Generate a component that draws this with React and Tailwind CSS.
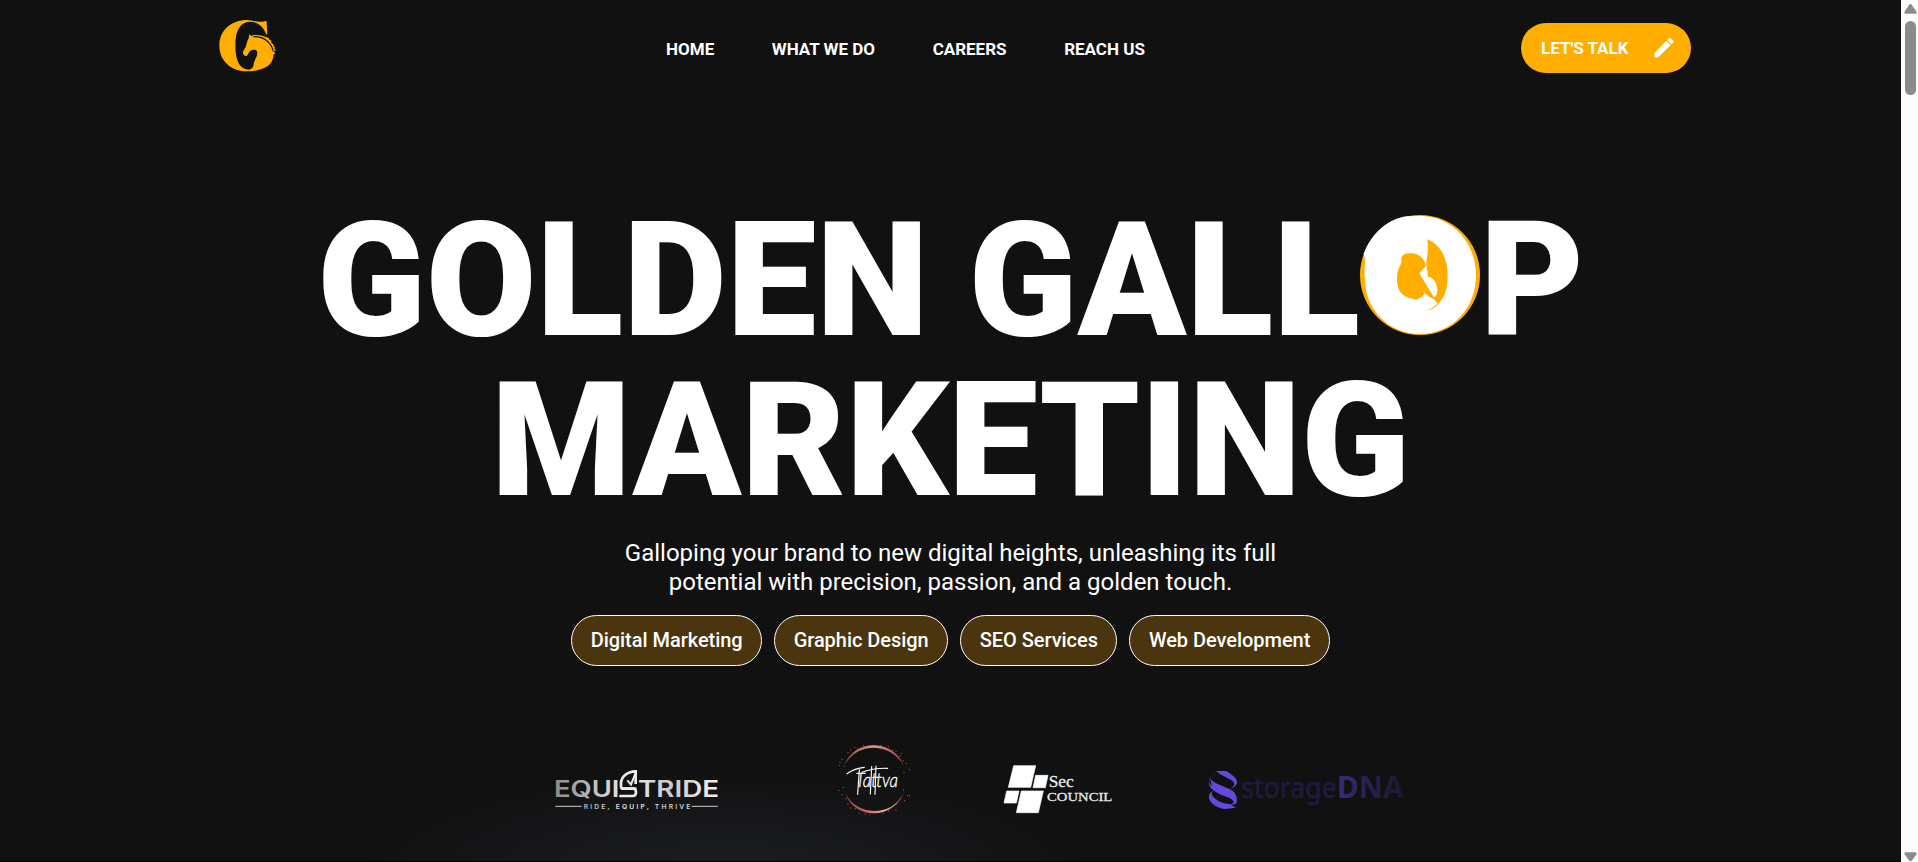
const navLinks = ['HOME', 'WHAT WE DO', 'CAREERS', 'REACH US'];

const services = ['Digital Marketing', 'Graphic Design', 'SEO Services', 'Web Development'];

function BrandLogo() {
  return (
    <svg className="h-[54px] w-[60px]" viewBox="54 54 180 162" aria-hidden="true">
      <path
        fill="#ffae00"
        d="M142 60C155 60 170 66 183 65C188 65 193 64 197 63C199 63 200 64 200 66L202 102L199 104C192 82 174 65 150 65C120 66 106 92 106 136C106 180 117 208 146 209C155 208 161 202 161 192C162 180 172 172 172 159C172 153 169 149 164 149C157 149 151 150 147 157C144 163 143 167 139 168C134 169 129 164 129 158C129 152 134 147 137 141C140 134 141 122 146 115L148 103L154 108L159 106C174 103 195 108 207 122C214 131 219 144 220 156C222 171 217 184 210 192C197 206 168 214 142 214C92 214 58 181 58 137C58 92 92 60 142 60Z"
      />
      <path
        fill="#ffae00"
        d="M164 109C175 106 190 107 200 112L209 116L206 117L216 124L212 125L224 138L219 137L227 145L222 145L228 152L221 153L226 160L219 165C216 143 203 120 180 112Z"
      />
      <path fill="none" stroke="#111" strokeWidth="3.2" d="M160 110C190 108 213 126 220 154" />
    </svg>
  );
}

function PencilIcon() {
  return (
    <svg className="h-5 w-5" viewBox="462 86 60 60" aria-hidden="true">
      <g fill="#fff" stroke="#fff" strokeWidth="3" strokeLinejoin="round">
        <path d="M499 96L511 107L476 141Q474 143 472 143H466L465 142V134Q465 131 467 129Z" />
        <path d="M503 92L508 88Q510 87 512 88L519 96Q520 98 519 99L515 103Z" />
      </g>
    </svg>
  );
}

function GallopMark() {
  return (
    <svg className="mt-[14px] h-[120px] w-[120px] shrink-0" viewBox="60 45 360 360" aria-hidden="true">
      <circle cx="240" cy="225" r="180" fill="#ffae00" />
      <path
        fill="#fff"
        d="M240 48C338 48 408 130 408 225C408 325 338 401 240 402C145 402 75 325 75 240C71 215 76 190 75 178L71 162C93 100 145 56 200 49Z"
      />
      <path
        fill="#ffae00"
        d="M262 118C300 132 323 174 323 225C323 268 313 296 293 312L280 294C288 290 293 280 292 268C290 246 279 231 264 230L260 199C255 190 268 160 262 118Z"
      />
      <path
        fill="#ffae00"
        d="M184 177C184 163 198 159 215 160C236 161 252 174 258 196C254 206 240 214 239 222L285 297C275 297 266 290 260 283C258 280 256 284 257 286C255 278 251 275 250 273L253 280C249 293 238 294 234 297C229 301 223 299 219 296C187 294 171 270 171 238C171 214 178 200 184 189Z"
      />
      <path fill="#ffae00" d="M297 309C286 324 273 331 257 332C270 329 281 322 291 312Z" />
    </svg>
  );
}

function Equistride() {
  return (
    <svg className="mt-6 h-[43px] w-[167px] overflow-visible" viewBox="39 84 501 129" role="img">
      <defs>
        <linearGradient id="steel" gradientUnits="userSpaceOnUse" x1="46" y1="0" x2="534" y2="0">
          <stop offset="0" stopColor="#8d8d8d" />
          <stop offset="0.2" stopColor="#b5b5b5" />
          <stop offset="0.45" stopColor="#eeeeee" />
          <stop offset="0.7" stopColor="#c9c9c9" />
          <stop offset="1" stopColor="#f1f1f1" />
        </linearGradient>
      </defs>
      <g fill="url(#steel)" fontFamily="Inter, sans-serif">
        <text x="42" y="172" fontSize="67" fontWeight="600" textLength="196" lengthAdjust="spacingAndGlyphs">EQUI</text>
        <text x="294" y="172" fontSize="67" fontWeight="600" textLength="243" lengthAdjust="spacingAndGlyphs">TRIDE</text>
        <text x="131" y="207" fontSize="20" fontWeight="600" textLength="320" lengthAdjust="spacing">RIDE, EQUIP, THRIVE</text>
      </g>
      <g fill="none" stroke="#ececec">
        <path strokeWidth="8" d="M289 146H248Q243 146 243 139V130C243 112 259 95 287 94V132" />
        <path strokeWidth="8" d="M245 146H279Q288 146 288 157Q288 168 279 168H238" />
        <path strokeWidth="6" d="M262 121L273 134L286 101" />
      </g>
      <path stroke="#a8a8a8" strokeWidth="4" d="M46 199H125M455 199H533" />
    </svg>
  );
}

const sparkles = [
  [60, 97], [66, 88], [72, 109], [84, 68], [92, 60], [104, 52], [112, 57], [130, 47], [182, 46], [196, 52],
  [205, 50], [218, 60], [228, 64], [240, 78], [250, 92], [258, 100], [268, 118], [252, 128], [70, 172], [57, 181],
  [66, 194], [78, 206], [84, 222], [92, 234], [106, 236], [118, 250], [136, 252], [190, 250], [206, 243], [214, 232],
  [228, 240], [230, 222], [240, 206], [254, 212], [263, 197], [250, 180], [268, 196], [58, 106], [244, 70], [150, 254],
];

function Tattva() {
  return (
    <svg className="h-[72px] w-[76px] overflow-visible" viewBox="48 42 228 216" role="img">
      <defs>
        <linearGradient id="roseTop" x1="0" x2="1">
          <stop offset="0" stopColor="#8e4743" />
          <stop offset="0.5" stopColor="#e59b8c" />
          <stop offset="1" stopColor="#8e3d40" />
        </linearGradient>
        <linearGradient id="roseBottom" x1="0" x2="1">
          <stop offset="0" stopColor="#8d4247" />
          <stop offset="0.35" stopColor="#c9636b" />
          <stop offset="0.65" stopColor="#f0aa98" />
          <stop offset="1" stopColor="#8a4742" />
        </linearGradient>
      </defs>
      <path fill="url(#roseTop)" d="M73 105C89 66 123 45 163 46C205 48 237 70 251 106C231 74 201 54 162 53C126 53 94 70 73 105Z" />
      <path fill="url(#roseBottom)" d="M75 190C90 229 122 250 162 250C204 249 236 226 252 188C233 222 203 243 163 243C125 243 95 224 75 190Z" />
      {sparkles.map(([x, y]) => (
        <circle key={`${x}-${y}`} cx={x} cy={y} r="1.9" fill="#a4544f" />
      ))}
      <text
        x="107"
        y="171"
        fontSize="56"
        fill="#fff"
        stroke="#fff"
        strokeWidth="1"
        fontFamily="Lato, sans-serif"
        fontWeight="300"
        fontStyle="italic"
        textLength="127"
        lengthAdjust="spacingAndGlyphs"
      >
        Tattva
      </text>
      <path
        fill="none"
        stroke="#fff"
        strokeWidth="3.4"
        strokeLinecap="round"
        d="M81 131C94 122 113 114 133 112M126 127C150 118 175 114 203 115M118 119L113 193M155 110L151 192M168 108L165 193"
      />
    </svg>
  );
}

function SecCouncil() {
  return (
    <svg className="mt-5 h-[50px] w-[110px] overflow-visible" viewBox="39 42 330 150" role="img">
      <g fill="#fff" stroke="#fff" strokeWidth="2" strokeLinejoin="round">
        <path d="M71 47H137L122 112H55Z" />
        <path d="M137 76H174L166 113H129Z" />
        <path d="M50 123H87L79 159H42Z" />
        <path d="M94 123H160L145 188H79Z" />
      </g>
      <g fill="#ececec" stroke="#ececec" strokeWidth="0.8" fontFamily="'Liberation Serif', serif">
        <text x="176" y="110" fontSize="48" textLength="75" lengthAdjust="spacingAndGlyphs">Sec</text>
        <text x="171" y="152" fontSize="40" textLength="196" lengthAdjust="spacingAndGlyphs">COUNCIL</text>
      </g>
    </svg>
  );
}

function StorageDna() {
  return (
    <svg className="mt-[26px] h-10 w-[196px] overflow-visible" viewBox="54 60 588 120" role="img">
      <defs>
        <linearGradient id="dnaFade" gradientUnits="userSpaceOnUse" x1="446" y1="0" x2="640" y2="0">
          <stop offset="0" stopColor="#3a2a7c" />
          <stop offset="0.4" stopColor="#2a2154" />
          <stop offset="1" stopColor="#1c182a" />
        </linearGradient>
      </defs>
      <g fill="#6548dc">
        <path d="M78 63H109C129 76 141 85 141 96C141 106 133 113 120 117C131 110 135 104 132 98C126 86 96 80 78 63Z" />
        <path d="M82 72C60 76 56 84 57 94C58 112 86 115 110 128C130 138 141 146 141 155C140 162 132 164 120 164C129 161 132 158 130 153C124 142 94 138 73 123C56 111 53 96 60 83C65 75 74 72 82 72Z" />
        <path d="M60 84C66 98 92 104 120 118C134 125 141 138 141 150L110 134L66 110Z" />
        <path d="M75 121C60 126 56 134 57 143C59 163 87 175 106 177L138 173L120 162C105 163 78 153 68 139C63 131 66 125 75 121Z" />
      </g>
      <g fontFamily="'Noto Sans', sans-serif">
        <text x="154" y="143" fontSize="87" fill="#1f1a3e" stroke="#1f1a3e" strokeWidth="2" textLength="286" lengthAdjust="spacingAndGlyphs">storage</text>
        <text x="441" y="143" fontSize="91" fontWeight="700" fill="url(#dnaFade)" textLength="200" lengthAdjust="spacingAndGlyphs">DNA</text>
      </g>
    </svg>
  );
}

function Scrollbar() {
  return (
    <div className="flex h-full w-[17px] shrink-0 flex-col items-center bg-[#fcfcfc] pl-px pt-1">
      <svg className="h-[10px] w-[13px]" viewBox="0 0 13 10" aria-hidden="true">
        <path fill="#8b8b8b" d="M5.3 0.8Q6.5 -0.6 7.7 0.8L12.4 7.6Q13 9.8 11.6 9.8H1.4Q0 9.8 0.6 7.6Z" />
      </svg>
      <div className="mt-[7px] h-[74px] w-[11px] rounded-full bg-[#8b8b8b]" />
      <svg className="mt-auto h-[10px] w-[13px] rotate-180" viewBox="0 0 13 10" aria-hidden="true">
        <path fill="#8b8b8b" d="M5.3 1.2Q6.5 0.4 7.7 1.2L12.4 7.6Q13 9.8 11.6 9.8H1.4Q0 9.8 0.6 7.6Z" />
      </svg>
    </div>
  );
}

export default function App() {
  return (
    <div className="flex h-[862px] w-full overflow-hidden bg-[#111111] font-[Roboto,sans-serif] text-white">
      <div className="flex min-w-0 flex-1 flex-col border-b border-[#080204] bg-[radial-gradient(ellipse_370px_100px_at_723px_870px,#1c1d24_0%,#17181c_45%,#111111_100%)]">
        <header className="flex h-[98px] shrink-0 items-start justify-between pl-[218px] pr-[210px]">
          <div className="mt-[18px] w-[72px]">
            <BrandLogo />
          </div>
          <nav className="mt-[36px] flex gap-[57.6px] text-[17px] leading-[26px] font-bold">
            {navLinks.map((label) => (
              <a key={label} href="#" className="whitespace-nowrap">
                {label}
              </a>
            ))}
          </nav>
          <button className="mt-[23px] flex h-[50px] w-[170px] items-center justify-between rounded-full bg-[#ffae00] pl-[20px] pr-[17px] text-[17px] font-bold whitespace-nowrap">
            <span className="pt-0.5">LET'S TALK</span>
            <PencilIcon />
          </button>
        </header>

        <main className="flex flex-col items-center pt-[103px]">
          <h1 className="flex flex-col items-center text-[160px] leading-[160px] font-black">
            <span className="flex items-start whitespace-nowrap">
              <span>GOLDEN GALL</span>
              <GallopMark />
              <span>P</span>
            </span>
            <span>MARKETING</span>
          </h1>
          <p className="mt-[18px] w-[700px] text-center text-2xl leading-[29px]">
            Galloping your brand to new digital heights, unleashing its full
            <br />
            potential with precision, passion, and a golden touch.
          </p>
          <ul className="mt-[18px] flex gap-3">
            {services.map((service) => (
              <li
                key={service}
                className="flex h-[51px] items-center rounded-full border border-white bg-[#4a350e] px-[18.5px] pb-0.5 text-xl font-medium tracking-[-0.04px] whitespace-nowrap"
              >
                {service}
              </li>
            ))}
          </ul>
        </main>

        <section className="mt-[78px] flex items-start pl-[553px]">
          <Equistride />
          <div className="ml-[116px]">
            <Tattva />
          </div>
          <div className="ml-[91px]">
            <SecCouncil />
          </div>
          <div className="ml-[95px]">
            <StorageDna />
          </div>
        </section>
      </div>
      <Scrollbar />
    </div>
  );
}
